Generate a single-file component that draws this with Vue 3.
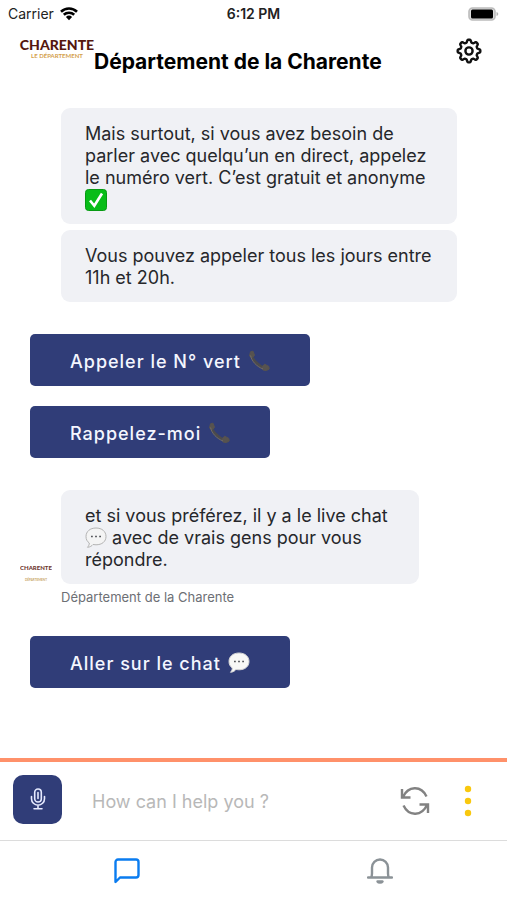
<script setup>
import { ref } from 'vue'

const message = ref('')

// Eight rounded teeth around a 26×26 box.
const gearPath = Array.from({ length: 96 }, (_, i) => {
  const angle = (i / 96) * Math.PI * 2
  const wave = Math.cos(angle * 8)
  const radius = 10 + 1.4 * Math.tanh(wave * 2)
  const x = (13 + radius * Math.sin(angle)).toFixed(2)
  const y = (13 - radius * Math.cos(angle)).toFixed(2)
  return `${i ? 'L' : 'M'}${x} ${y}`
}).join('') + 'Z'

const calls = ['Appeler le N° vert', 'Rappelez-moi']
</script>

<template>
  <div class="screen">
    <div class="status">
      <div class="carrier">
        <span>Carrier</span>
        <svg class="wifi" viewBox="0 0 18 14" aria-hidden="true">
          <path d="M1 4.8a11.5 11.5 0 0 1 16 0M3.8 7.8a7.5 7.5 0 0 1 10.4 0" />
          <path class="solid" d="M9 13.2 5.9 10a4.5 4.5 0 0 1 6.2 0Z" />
        </svg>
      </div>
      <time class="clock">6:12 PM</time>
      <svg class="battery" viewBox="0 0 31 14" aria-hidden="true">
        <rect x="1" y="1" width="26" height="12" rx="3.5" fill="#ddd" stroke="#bcbcbc" stroke-width="1.6" />
        <rect x="3" y="2.5" width="22" height="9" rx="1.5" fill="#000" />
        <path d="M28.500 5v4q1.800-.6 1.800-2t-1.800-2Z" fill="#b5b5b5" />
      </svg>
    </div>

    <header class="header">
      <div class="logo">
        <strong>CHARENTE</strong>
        <small>LE DÉPARTEMENT</small>
      </div>
      <h1>Département de la Charente</h1>
      <button class="plain settings" type="button" aria-label="Paramètres">
        <svg viewBox="0 0 26 26" aria-hidden="true">
          <path :d="gearPath" />
          <circle cx="13" cy="13" r="3.6" />
        </svg>
      </button>
    </header>

    <main class="chat">
      <div class="group">
        <p class="bubble">
          Mais surtout, si vous avez besoin de<br>parler avec quelqu’un en direct, appelez<br>le numéro vert. C’est gratuit et anonyme<br>
          <svg class="emoji" viewBox="0 0 22 22" role="img" aria-label="Validé">
            <rect x=".5" y=".5" width="21" height="21" rx="3" fill="#08bd18" stroke="#079a13" />
            <path d="m5 11.5 4.3 5.3L17 4.5" fill="none" stroke="#fff" stroke-width="2.6" />
          </svg>
        </p>
        <p class="bubble">Vous pouvez appeler tous les jours entre<br>11h et 20h.</p>
      </div>

      <div class="actions">
        <button v-for="label in calls" :key="label" class="action" type="button">
          {{ label }}
          <svg class="emoji" viewBox="0 0 22 22" aria-hidden="true">
            <path d="M3.500 4C3 8 9 16 17.500 18.500" fill="none" stroke="#4b4a4c" stroke-width="3" />
            <path d="M2.500 1.800 5 1.200l1.600 4.300-2.800 2.200L1.500 6Zm11.900 15 2.200-2.600 4.200 2.200.4 2.600-2.800 1.600-3.400-.6Z" fill="#57534f" stroke="#57534f" stroke-linejoin="round" />
            <path d="M2.600 5.500C3.500 11 8.500 16.500 15 19" fill="none" stroke="#7b746a" stroke-width=".8" />
          </svg>
        </button>
      </div>

      <div class="group signed">
        <svg class="avatar" viewBox="0 0 32 32" aria-hidden="true">
          <g text-anchor="middle">
            <text class="avatar-name" x="16" y="18">CHARENTE</text>
            <text class="avatar-sub" x="16" y="29">DÉPARTEMENT</text>
          </g>
        </svg>
        <p class="bubble">
          et si vous préférez, il y a le live chat<br>
          <svg class="emoji" viewBox="0 0 22 22" aria-hidden="true">
            <path d="M11 1C5 1 1 4.5 1 9.5c0 3 1.2 5 3.3 6.5 0 1.7-.7 3-1.8 4.300 2.5-.2 4.3-1.300 5.500-2.800l3 .3c6 0 10-3.300 10-8.300S17 1 11 1Z" fill="#f4f4f4" stroke="#b3b3b3" />
            <path d="M6 9.500h1.800m2.300 0h1.800m2.300 0H16" stroke="#55575b" stroke-width="1.700" />
          </svg>
          avec de vrais gens pour vous<br>répondre.
        </p>
        <span class="sender">Département de la Charente</span>
      </div>

      <div class="actions">
        <button class="action" type="button">
          Aller sur le chat
          <svg class="emoji" viewBox="0 0 22 22" aria-hidden="true">
            <path d="M11 1C5 1 1 4.500 1 9.500c0 3 1.200 5 3.300 6.500 0 1.700-.7 3-1.800 4.300 2.500-.2 4.300-1.300 5.500-2.800l3 .3c6 0 10-3.300 10-8.300S17 1 11 1Z" fill="#f8f8f6" stroke="#d5d5d5" />
            <path d="M6 9.500h1.800m2.300 0h1.800m2.300 0H16" stroke="#55575b" stroke-width="1.700" />
          </svg>
        </button>
      </div>
    </main>

    <form class="composer" @submit.prevent>
      <button class="mic" type="button" aria-label="Micro">
        <svg viewBox="0 0 16 22" aria-hidden="true">
          <rect x="4.700" y="1" width="6.600" height="13" rx="3.300" />
          <path d="M1.500 8.500v2.200a6.500 6.500 0 0 0 13 0V8.500M8 17v3.700M4 20.700h8M8 4.500v6" />
        </svg>
      </button>
      <input v-model="message" type="text" placeholder="How can I help you ?" aria-label="Message">
      <button class="plain refresh" type="button" aria-label="Recommencer">
        <svg viewBox="0 0 30 28" aria-hidden="true">
          <path d="M2 2v8.500h8.500M3 10C8-1 21-2 26.500 9.500M28 26v-8.500h-8.500M27 18C22 29 9 30 3.500 18.500" />
        </svg>
      </button>
      <button class="plain more" type="button" aria-label="Plus">
        <svg viewBox="0 0 8 32" aria-hidden="true">
          <circle cx="4" cy="4" r="3.200" /><circle cx="4" cy="16" r="3.200" /><circle cx="4" cy="28" r="3.200" />
        </svg>
      </button>
    </form>

    <nav class="tabs" aria-label="Navigation">
      <a href="#chat" class="active" aria-label="Discussion">
        <svg viewBox="0 0 26 26" aria-hidden="true"><path d="M1.500 24V4a2.500 2.500 0 0 1 2.500-2.500h18A2.500 2.500 0 0 1 24.500 4v13a2.500 2.500 0 0 1-2.500 2.500H6Z" /></svg>
      </a>
      <a href="#notifications" aria-label="Notifications">
        <svg viewBox="0 0 26 26" aria-hidden="true"><path d="M1 19.500h24M4 19.500c.8-1 1-2 1-4V9.500a8 8 0 0 1 16 0v6c0 2 .2 3 1 4M10.500 23.500c1 1.500 4 1.500 5 0Z" /></svg>
      </a>
    </nav>
  </div>
</template>

<style>
body {
  margin: 0;
  background: #fff;
}
</style>

<style scoped>
* {
  box-sizing: border-box;
}
.screen {
  min-height: 100vh;
  display: flex;
  flex-direction: column;
  font-family: Inter, "Open Sans", sans-serif;
  color: #26272b;
}
svg {
  display: block;
  flex: none;
}
button {
  font: inherit;
  border: 0;
  cursor: pointer;
}
.plain {
  padding: 0;
  background: none;
}
.status {
  display: grid;
  grid-template-columns: 1fr auto 1fr;
  align-items: center;
  height: 27px;
  padding: 0 8px;
  font-size: 14px;
  color: #222;
}
.carrier {
  display: flex;
  align-items: center;
  gap: 6px;
}
.wifi {
  width: 18px;
  height: 14px;
  fill: none;
  stroke: #000;
  stroke-width: 2.6;
}
.wifi .solid {
  fill: #000;
  stroke: none;
}
.clock {
  font-weight: 600;
}
.battery {
  width: 31px;
  height: 14px;
  justify-self: end;
}
.header {
  display: flex;
  height: 61px;
  padding: 11px 25px 0 20px;
}
.logo {
  display: flex;
  flex-direction: column;
  align-items: center;
  width: 74px;
  font-family: Lato, sans-serif;
}
.logo strong {
  font-size: 14px;
  line-height: 14px;
  font-weight: 900;
  color: #55170f;
}
.logo small {
  font-size: 6px;
  line-height: 8px;
  font-weight: 700;
  color: #d3a04c;
}
h1 {
  flex: 1;
  margin: 10px 0 0;
  font-size: 21px;
  line-height: 28px;
  font-weight: 700;
  color: #000;
  white-space: nowrap;
}
.settings {
  align-self: flex-start;
}
.settings svg {
  width: 26px;
  height: 26px;
  fill: none;
  stroke: #111;
  stroke-width: 2.4;
  stroke-linejoin: round;
}
.chat {
  flex: 1;
  display: flex;
  flex-direction: column;
  gap: 32px;
  padding: 20px 30px 0;
}
.group {
  display: flex;
  flex-direction: column;
  align-items: flex-start;
  gap: 6px;
  padding: 0 20px 0 31px;
}
.bubble {
  margin: 0;
  padding: 15px 24px 13px;
  border-radius: 9px;
  background: #f0f1f5;
  font-size: 18px;
  line-height: 22px;
}
.group:first-child .bubble {
  width: 100%;
}
.emoji {
  display: inline-block;
  width: 22px;
  height: 22px;
  vertical-align: top;
}
.actions {
  display: flex;
  flex-direction: column;
  align-items: flex-start;
  gap: 20px;
}
.action {
  display: flex;
  align-items: center;
  gap: 7px;
  height: 52px;
  padding: 2px 40px 0;
  border-radius: 5px;
  background: #303d78;
  color: #f4f6ff;
  font-size: 18px;
  font-weight: 500;
  letter-spacing: 1px;
}
.group.signed {
  display: grid;
  grid-template-columns: 31px 80%;
  align-items: end;
  gap: 4px 0;
  padding: 0;
}
.avatar {
  width: 32px;
  height: 32px;
  margin-left: -10px;
}
.avatar-name {
  font: 900 6px Lato, sans-serif;
  fill: #70382f;
}
.avatar-sub {
  font: 700 3px Lato, sans-serif;
  fill: #c9a767;
}
.sender {
  grid-column: 2;
  font-size: 13px;
  line-height: 18px;
  color: #6d6f75;
}
.signed + .actions {
  margin-top: -2px;
}
.composer {
  display: flex;
  align-items: center;
  height: 83px;
  padding: 0 35px 0 13px;
  border-top: 4px solid #ff916a;
  border-bottom: 1px solid #dcdcdc;
}
.mic {
  display: grid;
  place-items: center;
  flex: none;
  width: 49px;
  height: 49px;
  margin-bottom: 4px;
  padding: 0;
  border-radius: 10px;
  background: #303d78;
}
.mic svg {
  width: 16px;
  height: 22px;
  fill: none;
  stroke: #e6eaff;
  stroke-width: 1.6;
  stroke-linecap: round;
}
input {
  flex: 1;
  min-width: 0;
  height: 40px;
  padding: 0 30px;
  border: 0;
  outline: 0;
  background: none;
  font: 18px Inter, sans-serif;
  color: #26272b;
}
input::placeholder {
  color: #b8b8b8;
  opacity: 1;
}
.refresh svg {
  width: 30px;
  height: 28px;
  fill: none;
  stroke: #828282;
  stroke-width: 2.4;
}
.more {
  margin-left: 34px;
}
.more svg {
  width: 8px;
  height: 32px;
  fill: #f9c80e;
}
.tabs {
  display: grid;
  grid-template-columns: 1fr 1fr;
  height: 59px;
}
.tabs a {
  display: grid;
  place-items: center;
  color: #8b9297;
}
.tabs .active {
  color: #0a7cf0;
}
.tabs svg {
  width: 26px;
  height: 26px;
  fill: none;
  stroke: currentColor;
  stroke-width: 2.4;
  stroke-linejoin: round;
  stroke-linecap: round;
}
</style>
